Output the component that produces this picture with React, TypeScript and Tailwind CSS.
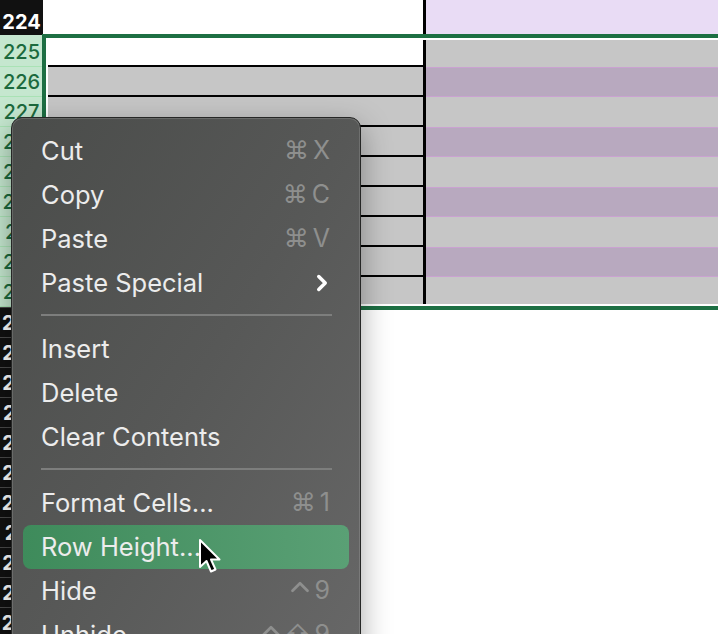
import { ChevronRight, ChevronUp } from "lucide-react";

const selRows = [225, 226, 227, 228, 229, 230, 231, 232, 233];
const lowerRows = [234, 235, 236, 237, 238, 239, 240, 241, 242, 243, 244];

type Item =
  | { kind: "item"; label: string; keys?: string[]; sub?: boolean; active?: boolean }
  | { kind: "sep" };

const menu: Item[] = [
  { kind: "item", label: "Cut", keys: ["⌘", "X"] },
  { kind: "item", label: "Copy", keys: ["⌘", "C"] },
  { kind: "item", label: "Paste", keys: ["⌘", "V"] },
  { kind: "item", label: "Paste Special", sub: true },
  { kind: "sep" },
  { kind: "item", label: "Insert" },
  { kind: "item", label: "Delete" },
  { kind: "item", label: "Clear Contents" },
  { kind: "sep" },
  { kind: "item", label: "Format Cells...", keys: ["⌘", "1"] },
  { kind: "item", label: "Row Height...", active: true },
  { kind: "item", label: "Hide", keys: ["^", "9"] },
  { kind: "item", label: "Unhide", keys: ["^", "⇧", "9"] },
];

function Key({ k }: { k: string }) {
  // the control key is drawn as a wide caret, as macOS does
  if (k === "^") return <ChevronUp className="w-[30px] h-[30px] -mt-[9px] -mx-[5px]" strokeWidth={2.2} />;
  return <span>{k}</span>;
}

function MenuRow({ item }: { item: Item }) {
  if (item.kind === "sep") {
    return (
      <div className="pt-[9px] pb-[11px] pl-[29px] pr-[28px]">
        <div className="h-[2px] bg-[#7d7e7d]" />
      </div>
    );
  }
  return (
    <div
      className={
        "mx-[11px] h-[44px] flex items-center justify-between pl-[18px] pr-[19px] rounded-[8px] " +
        (item.active ? "bg-gradient-to-r from-[#3e8b5b] to-[#5aa075]" : "")
      }
    >
      <span className="text-[25.5px] text-[#ececec]">{item.label}</span>
      {item.keys && (
        <span className="flex items-center gap-[4px] text-[25px] text-[#8e8f8e]">
          {item.keys.map((k, i) => (
            <Key key={i} k={k} />
          ))}
        </span>
      )}
      {item.sub && <ChevronRight className="w-[26px] h-[26px] text-white -mr-[5px]" strokeWidth={3.2} />}
    </div>
  );
}

export default function App() {
  return (
    <div className="relative w-[718px] h-[634px] overflow-hidden bg-white font-['Inter','DejaVu_Sans',sans-serif]">
      {/* sheet rows */}
      <div className="flex flex-col">
        {/* Row 224 */}
        <div className="flex h-[35px]">
          <div className="w-[43px] shrink-0 bg-[#111111] flex items-end justify-center pb-[3px] text-[20px] font-bold text-white leading-none">
            224
          </div>
          <div className="w-[383px] shrink-0 bg-white border-r-[3px] border-black" />
          <div className="flex-1 bg-[#e9dcf5]" />
        </div>
        <div className="flex h-[2px]">
          <div className="w-[43px] shrink-0 bg-[#c5e7cf]" />
          <div className="flex-1 bg-white" />
        </div>

        {/* Selected rows */}
        {selRows.map((n, i) => {
          const purple = i % 2 === 1;
          return (
            <div key={n} className="flex h-[30px]">
              <div className="w-[43px] shrink-0 bg-[#c5e7cf] border-b border-[#a9e3b5] flex items-center justify-center text-[20px] font-medium text-[#1c6a3d] leading-none">
                {n}
              </div>
              <div
                className={
                  "w-[383px] shrink-0 border-r-[3px] border-black " +
                  (i === 0 ? "bg-white " : "bg-[#c6c6c6] ") +
                  (i < selRows.length - 1 ? "border-b-2" : "")
                }
              />
              <div
                className={
                  "flex-1 " +
                  (purple ? "bg-[#b8a9bf] border-y border-[#caa2d1]" : "bg-[#c6c6c6]")
                }
              />
            </div>
          );
        })}

        {/* Rows below the selection */}
        {lowerRows.map((n) => (
          <div key={n} className="flex h-[30px]">
            <div className="w-[43px] shrink-0 bg-[#111111] border-t border-[#4a4a4a] flex items-center justify-center text-[20px] font-bold text-white leading-none">
              {n}
            </div>
            <div className="flex-1 bg-white" />
          </div>
        ))}
      </div>

      {/* Selection outline */}
      <div className="absolute left-[42px] top-[34px] w-[690px] h-[276px] border-[4px] border-[#1d6f43] shadow-[inset_0_0_0_2px_white]" />

      {/* Context menu */}
      <div className="absolute left-[11px] top-[117px] w-[350px] h-[560px] rounded-[11px] border border-[#262726] bg-gradient-to-br from-[#4a4c4a] via-[#575857] to-[#686868] shadow-[inset_0_0_0_1px_rgba(255,255,255,0.14),0_10px_30px_rgba(0,0,0,0.35)] pt-[11px]">
        {menu.map((item, i) => (
          <MenuRow key={i} item={item} />
        ))}
      </div>

      {/* Mouse pointer */}
      <svg
        className="absolute left-[197px] top-[537px]"
        width="26"
        height="40"
        viewBox="0 0 26 40"
      >
        <path
          d="M3 3 L3 30 L9.5 24 L14 34.5 L18.5 32.5 L14 22.5 L22.5 22.5 Z"
          fill="#000"
          stroke="#fff"
          strokeWidth="2"
          strokeLinejoin="round"
        />
      </svg>
    </div>
  );
}
